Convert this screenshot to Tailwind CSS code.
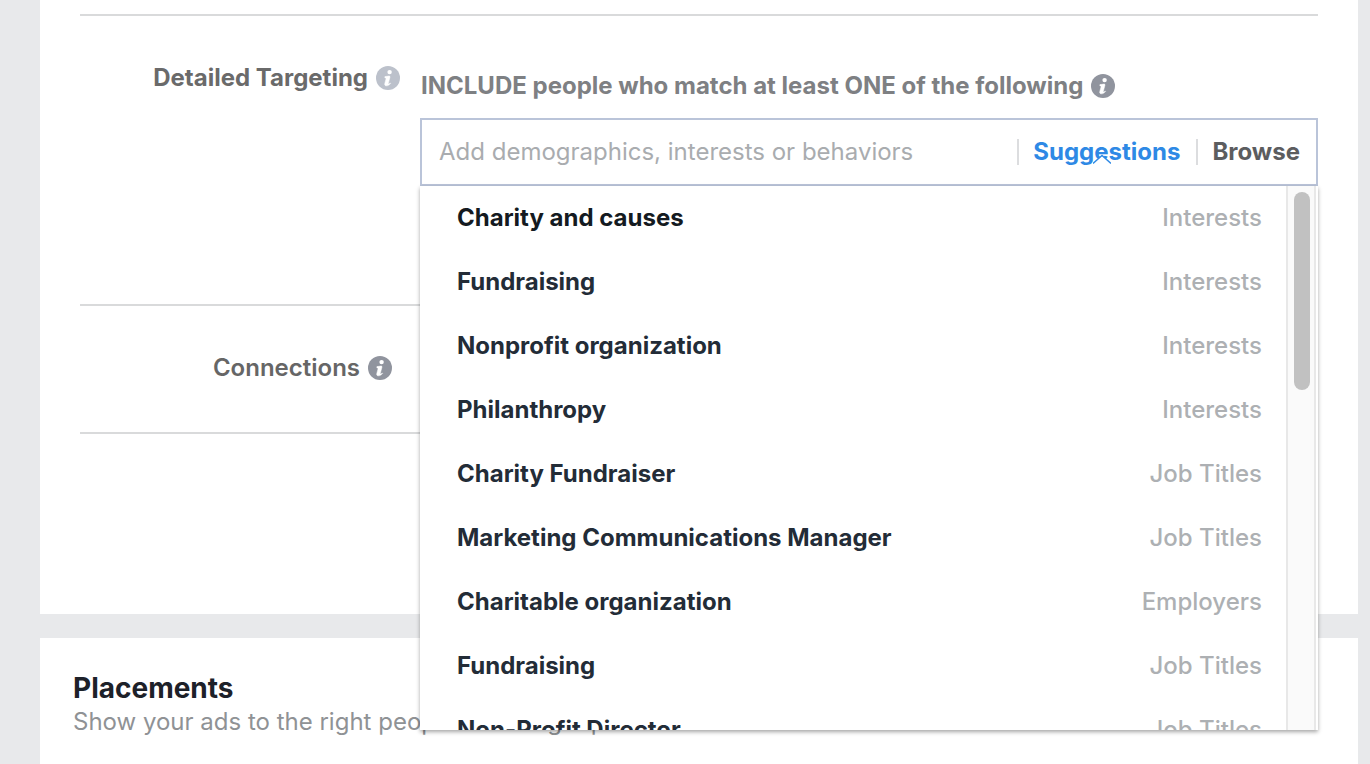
<!DOCTYPE html>
<html lang="en">
<head>
<meta charset="utf-8">
<meta name="viewport" content="width=device-width, initial-scale=1">
<title>Detailed Targeting</title>
<script src="https://cdn.jsdelivr.net/npm/@tailwindcss/browser@4"></script>
</head>
<body class="h-screen overflow-hidden bg-[#e8e9eb] font-['Inter','Liberation_Sans',sans-serif] text-2xl leading-8">
<svg class="hidden" aria-hidden="true">
  <symbol id="info" viewBox="0 0 24 24">
    <circle cx="12" cy="12" r="12" fill="currentColor"/>
    <circle cx="13.6" cy="6.1" r="2.2" fill="#fff"/>
    <path d="M8.9 10.600c1.400 0 2.700-.5 4-.6 1 0 1.200.5 1 1.400l-1.500 5.700c-.2.8 0 1 .5.800.5-.2.900-.6 1.300-1l.4.400c-1 1.600-2.500 2.500-4.100 2.500-1.500 0-2.100-.9-1.700-2.400l1.200-4.400c.2-.8 0-1.100-1.100-1.100z" fill="#fff" stroke="#fff" stroke-width=".5"/>
  </symbol>
</svg>
<main class="pl-10 pr-3">
  <section class="bg-white px-10 pt-3.5" aria-label="Audience">
    <div class="flex items-start border-t-2 border-[#d9dadb]">
      <div class="mr-5 flex w-80 shrink-0 items-center justify-end gap-2 pt-[46px]">
        <label for="targeting" class="font-bold text-[#6a6a6a]">Detailed Targeting</label>
        <button type="button" aria-label="About detailed targeting" class="text-[#bcc1cb]"><svg class="size-6"><use href="#info"/></svg></button>
      </div>
      <div class="min-w-0 flex-1 pt-[54px] pb-[118px]">
        <div class="flex items-center gap-2 pl-px whitespace-nowrap">
          <p class="font-bold text-[#7e8083]">INCLUDE people who match at least ONE of the following</p>
          <button type="button" aria-label="About matching" class="text-[#90949e]"><svg class="size-6"><use href="#info"/></svg></button>
        </div>
        <div class="relative mt-4">
          <div class="flex h-[68px] items-center border-2 border-[#bac4d9] bg-white pl-[17px] pr-4">
            <input id="targeting" type="text" placeholder="Add demographics, interests or behaviors" class="min-w-0 flex-1 outline-none placeholder:text-[#a9acaf]">
            <button type="button" aria-expanded="true" class="relative h-[26px] border-l-2 border-[#dcdddf] pl-3.5 pr-4 leading-[26px] font-[650] text-[#2e89e5]">Suggestions
              <svg class="absolute left-[74px] top-3.5 h-3 w-[18px]" viewBox="0 0 18 12" fill="none" aria-hidden="true"><path d="M0 11 9 2l9 9v1H0z" fill="#fff"/><path d="M0 10.500 9 2.500l9 8" stroke="#2e89e5" stroke-width="1.400"/></svg>
            </button>
            <button type="button" class="h-[26px] border-l-2 border-[#dcdddf] pl-3.5 leading-[26px] font-[650] text-[#5c5d5f]">Browse</button>
          </div>
          <div class="absolute inset-x-0 top-full z-10 flex h-[544px] overflow-hidden bg-white shadow-[0_2px_4px_rgba(0,0,0,0.35)]">
            <ul class="min-w-0 flex-1 pl-[37px] pr-6 font-[450] text-[#adb0b3]">
              <li class="flex h-16 items-center justify-between"><span class="font-[650] text-[#141a21]">Charity and causes</span><span>Interests</span></li>
              <li class="flex h-16 items-center justify-between"><span class="font-[650] text-[#232c37]">Fundraising</span><span>Interests</span></li>
              <li class="flex h-16 items-center justify-between"><span class="font-[650] text-[#232c37]">Nonprofit organization</span><span>Interests</span></li>
              <li class="flex h-16 items-center justify-between"><span class="font-[650] text-[#232c37]">Philanthropy</span><span>Interests</span></li>
              <li class="flex h-16 items-center justify-between"><span class="font-[650] text-[#232c37]">Charity Fundraiser</span><span>Job Titles</span></li>
              <li class="flex h-16 items-center justify-between"><span class="font-[650] text-[#232c37]">Marketing Communications Manager</span><span>Job Titles</span></li>
              <li class="flex h-16 items-center justify-between"><span class="font-[650] text-[#232c37]">Charitable organization</span><span>Employers</span></li>
              <li class="flex h-16 items-center justify-between"><span class="font-[650] text-[#232c37]">Fundraising</span><span>Job Titles</span></li>
              <li class="flex h-16 items-center justify-between"><span class="font-[650] text-[#232c37]">Non-Profit Director</span><span>Job Titles</span></li>
            </ul>
            <div class="mr-0.5 w-[30px] border-x-2 border-[#e8e8e8] bg-[#fafafa] pl-1.5 pt-1.5" aria-hidden="true">
              <div class="h-[198px] w-4 rounded-full bg-[#c1c1c1]"></div>
            </div>
          </div>
        </div>
      </div>
    </div>
    <div class="border-t-2 border-[#d9dadb] pt-[46px] pb-12">
      <div class="flex w-[312px] items-center justify-end gap-2">
        <span class="font-semibold text-[#666]">Connections</span>
        <button type="button" aria-label="About connections" class="text-[#90949e]"><svg class="size-6"><use href="#info"/></svg></button>
      </div>
    </div>
    <div class="border-t-2 border-[#d9dadb] pb-[180px]"></div>
  </section>
  <section class="mt-6 bg-white px-[33px] pt-8 pb-12">
    <h2 class="text-[28px] leading-9 font-[650] text-[#1d2129]">Placements</h2>
    <p class="text-[#8f9295]">Show your ads to the right people in the right places.</p>
  </section>
</main>
</body>
</html>
